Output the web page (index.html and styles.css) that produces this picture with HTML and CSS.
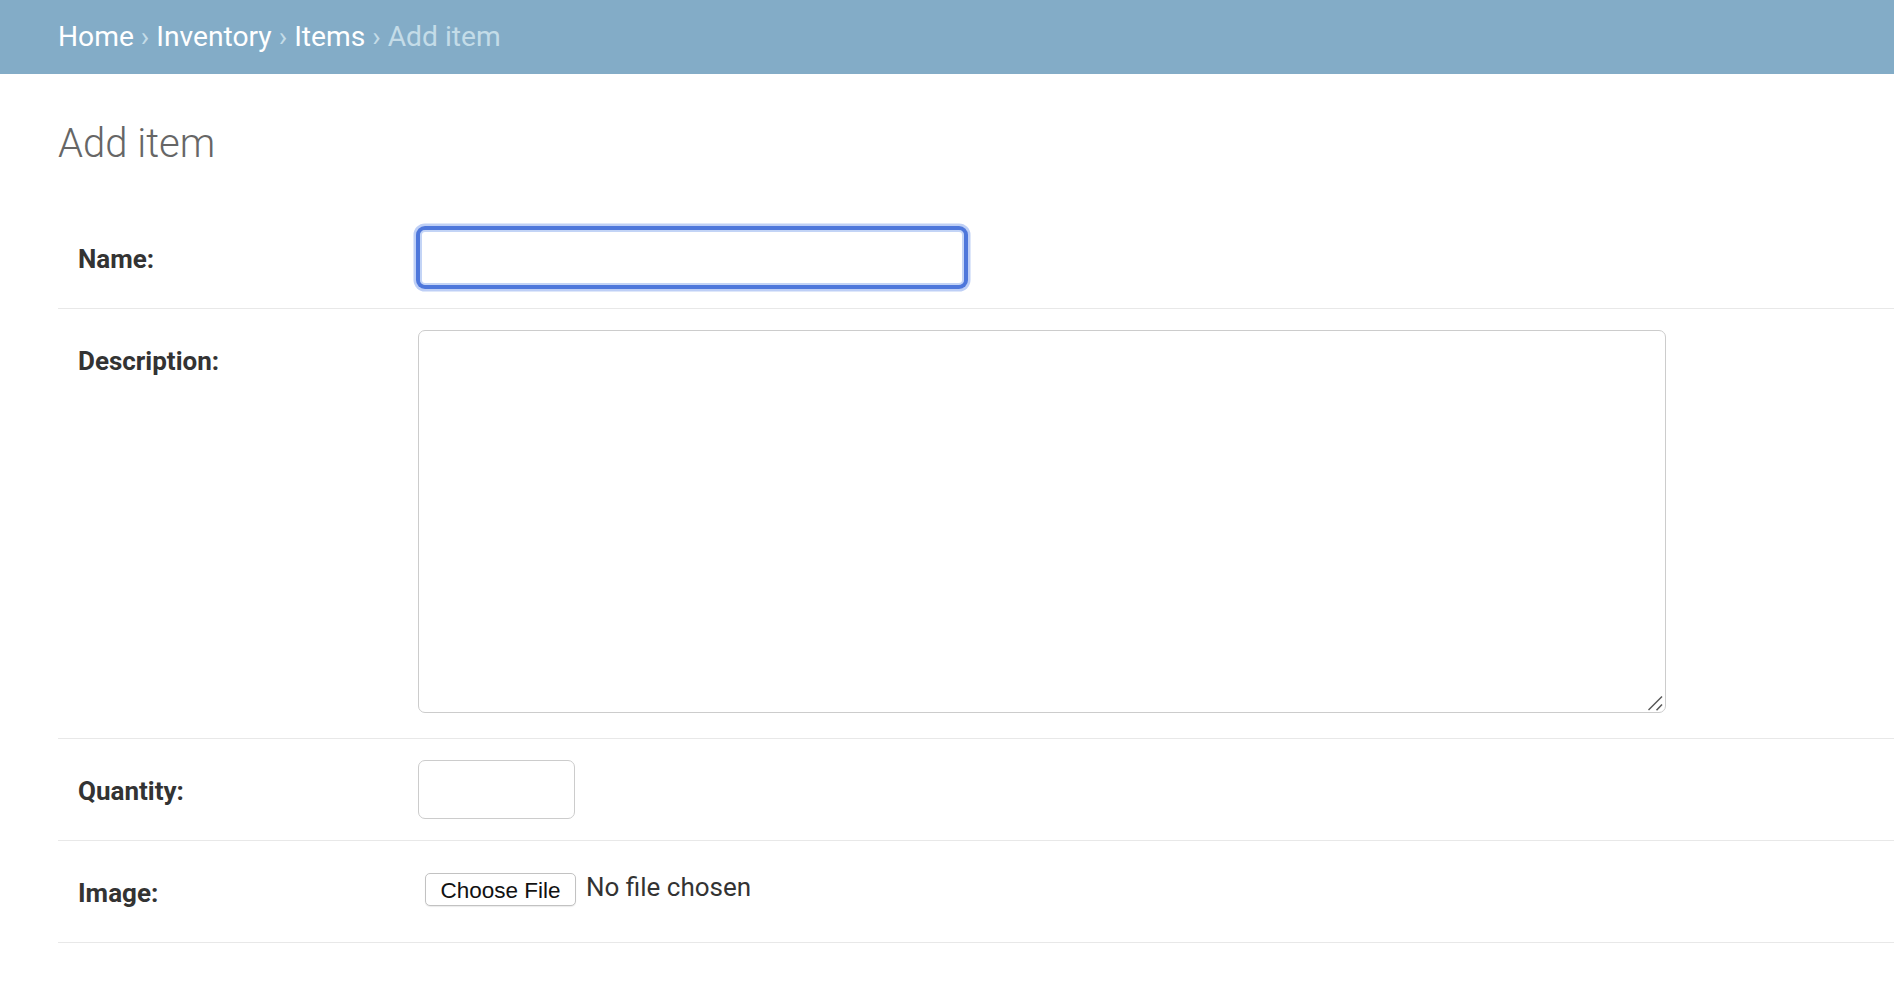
FILE: index.html
```html
<!DOCTYPE html>
<html lang="en">
<head>
<meta charset="utf-8">
<title>Add item</title>
<link rel="stylesheet" href="styles.css">
</head>
<body>
<nav class="breadcrumbs">
  <a href="#">Home</a> › <a href="#">Inventory</a> › <a href="#">Items</a> › Add item
</nav>
<main class="content">
  <h1 class="title">Add item</h1>
  <form class="form">
    <div class="form-row">
      <label class="label" for="name">Name:</label>
      <input class="input input-name" id="name" type="text">
    </div>
    <div class="form-row">
      <label class="label" for="desc">Description:</label>
      <div class="textarea-wrap">
        <textarea class="textarea" id="desc"></textarea>
        <svg class="resizer" width="16" height="16" viewBox="0 0 16 16">
          <line x1="1.5" y1="15" x2="15" y2="1.5" stroke="#555" stroke-width="1.5"/>
          <line x1="9.5" y1="15.3" x2="15" y2="9.5" stroke="#555" stroke-width="1.5"/>
        </svg>
      </div>
    </div>
    <div class="form-row">
      <label class="label" for="qty">Quantity:</label>
      <input class="input input-qty" id="qty" type="text">
    </div>
    <div class="form-row">
      <label class="label" for="img">Image:</label>
      <div class="file-field">
        <button type="button" class="file-btn" id="img">Choose File</button>
        <span class="file-text">No file chosen</span>
      </div>
    </div>
  </form>
</main>
</body>
</html>
```

FILE: styles.css
```css
html, body {
  margin: 0;
  padding: 0;
  background: #fff;
}

body {
  font-family: Roboto, "Liberation Sans", Arial, sans-serif;
  color: #333;
}

.breadcrumbs {
  height: 74px;
  line-height: 74px;
  background: #83acc7;
  color: #c4dce8;
  font-size: 28.2px;
  padding: 0 0 0 58px;
  box-sizing: border-box;
  white-space: nowrap;
}

.breadcrumbs a {
  color: #fff;
  text-decoration: none;
}

.content {
  padding: 0 0 0 58px;
}

.title {
  margin: 45.5px 0 40.5px;
  font-size: 40px;
  line-height: 47px;
  font-weight: 300;
  color: #666;
}

.form {
  margin: 0;
}

.form-row {
  display: flex;
  align-items: flex-start;
  padding: 21px 21px 21px 20px;
  border-bottom: 1px solid #e8e8e8;
}

.label {
  flex: 0 0 340px;
  box-sizing: border-box;
  height: 59px;
  padding-top: 2px;
  line-height: 59px;
  font-size: 26px;
  font-weight: 700;
  color: #333;
}

.input {
  box-sizing: border-box;
  height: 59px;
  margin: 0;
  border: 1.5px solid #ccc;
  border-radius: 7px;
  background: #fff;
  font: inherit;
  font-size: 26px;
  padding: 0 10px;
  outline: none;
}

.input-name {
  width: 548px;
  border: 2px solid #4e77db;
  box-shadow: inset 0 0 0 2px #c3d4f6, 0 0 0 2px #4e77db, 0 0 0 4.5px rgba(125, 160, 238, 0.5);
}

.input-qty {
  width: 157px;
}

.textarea-wrap {
  position: relative;
  width: 1248px;
  height: 383px;
  margin-bottom: 4px;
}

.textarea {
  display: block;
  box-sizing: border-box;
  width: 1248px;
  height: 383px;
  margin: 0;
  border: 1.5px solid #ccc;
  border-radius: 7px;
  resize: none;
  outline: none;
  font: inherit;
}

.resizer {
  position: absolute;
  right: 3px;
  bottom: 2px;
}

.file-field {
  display: flex;
  align-items: center;
  height: 59px;
  padding-bottom: 4px;
  box-sizing: border-box;
}

.file-btn {
  box-sizing: border-box;
  margin: 0 10px 0 7px;
  width: 151px;
  height: 33px;
  padding: 3px 0 0;
  background: #fff;
  border: 1px solid #c2c2c2;
  border-radius: 5px;
  box-shadow: 0 1px 1px rgba(0, 0, 0, 0.08);
  font-family: "Liberation Sans", Arial, sans-serif;
  font-size: 22.5px;
  line-height: 28px;
  color: #111;
}

.file-text {
  margin-bottom: 5px;
  font-size: 26px;
  color: #333;
}
```
